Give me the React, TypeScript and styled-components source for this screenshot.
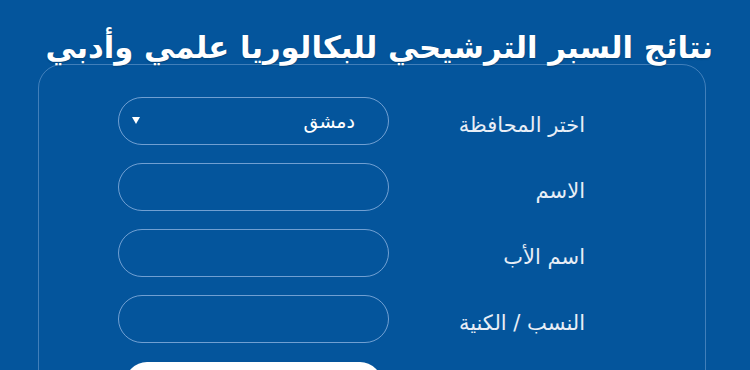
import React, { FC } from 'react';
import styled, { createGlobalStyle } from 'styled-components';

const Global = createGlobalStyle`
    html, body {
        margin: 0;
        padding: 0;
        background: #04559c;
        overflow: hidden;
    }
    body {
        font-family: "DejaVu Sans", "Liberation Sans", sans-serif;
    }
`;

const Page = styled.div`
    direction: rtl;
    width: 750px;
    height: 370px;
    background: #04559c;
    overflow: hidden;
`;

const Title = styled.h1`
    margin: 0;
    padding: 31px 37px 0 0;
    height: 33px;
    color: #ffffff;
    font-size: 30.7px;
    font-weight: bold;
    line-height: 33px;
    white-space: nowrap;
    text-shadow: 0 1px 2px rgba(0, 0, 0, 0.25);
`;

const Card = styled.div`
    margin: 0 44px 0 38px;
    border: 1px solid rgba(140, 180, 225, 0.45);
    border-radius: 24px;
    padding: 32px 120px 0 0;
    height: 400px;
    display: flex;
    flex-direction: column;
    gap: 18px;
`;

const Row = styled.div`
    display: flex;
    align-items: center;
    height: 48px;
`;

const Label = styled.label`
    width: 196px;
    flex: none;
    color: #e8eef6;
    font-size: 21px;
    padding-top: 7px;
    white-space: nowrap;
`;

const Field = styled.div`
    position: relative;
    width: 271px;
    height: 48px;
    box-sizing: border-box;
    border: 1px solid rgba(170, 200, 240, 0.65);
    border-radius: 24px;
    display: flex;
    align-items: center;
    padding: 0 33px 0 13px;
    color: #ffffff;
    font-size: 19px;
`;

const Value = styled.span`
    flex: 1;
`;

const Arrow = styled.span`
    width: 0;
    height: 0;
    border-left: 4px solid transparent;
    border-right: 4px solid transparent;
    border-top: 7px solid #ffffff;
    margin-bottom: 2px;
`;

const Submit = styled.button`
    margin: 1px 203px 0 0;
    width: 257px;
    height: 44px;
    border: none;
    border-radius: 22px;
    background: #ffffff;
    flex: none;
`;

const FormRow: FC<{ label: string; children?: React.ReactNode }> = ({ label, children }) => (
    <Row>
        <Label>{label}</Label>
        <Field>{children}</Field>
    </Row>
);

export default function App() {
    return (
        <Page>
            <Global />
            <Title>نتائج السبر الترشيحي للبكالوريا علمي وأدبي</Title>
            <Card>
                <FormRow label="اختر المحافظة">
                    <Value>دمشق</Value>
                    <Arrow />
                </FormRow>
                <FormRow label="الاسم" />
                <FormRow label="اسم الأب" />
                <FormRow label="النسب / الكنية" />
                <Submit />
            </Card>
        </Page>
    );
}
